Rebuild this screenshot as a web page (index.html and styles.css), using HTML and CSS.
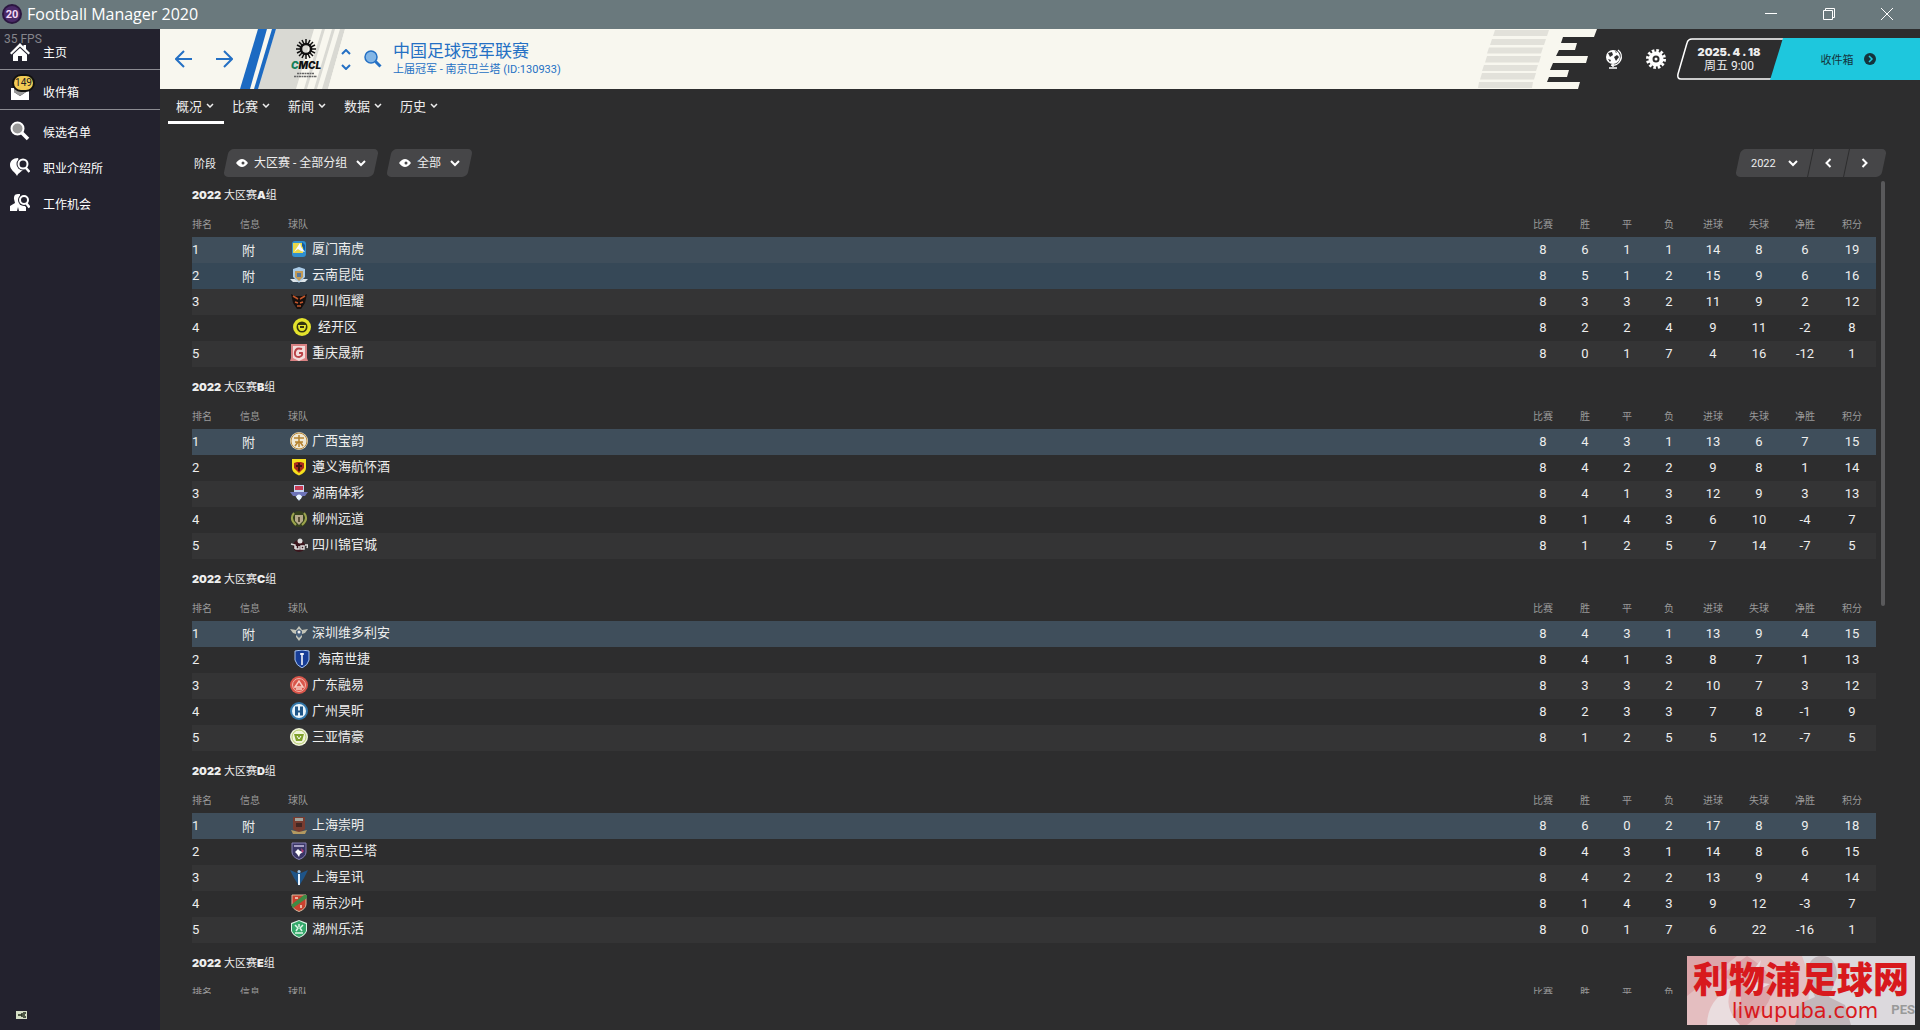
FILE: index.html
```html
<!DOCTYPE html>
<html lang="zh-CN">
<head>
    <meta charset="UTF-8">
    <meta name="viewport" content="width=device-width, initial-scale=1.0">
    <title>Football Manager 2020</title>
    <link rel="stylesheet" href="styles.css">
</head>
<body>

    <!-- Window title bar -->
    <div class="titlebar">
        <svg class="app-icon" viewBox="0 0 20 20"><circle cx="10" cy="10" r="10" fill="#2b1640"/><circle cx="10" cy="10" r="8" fill="#4a2a68"/><text x="10" y="14" text-anchor="middle" font-size="11" font-weight="bold" fill="#f3d9f5">20</text></svg>
        <span class="app-name">Football Manager 2020</span>
        <div class="window-buttons">
            <button aria-label="最小化"><svg viewBox="0 0 12 12"><path d="M0 5.500h12"/></svg></button>
            <button aria-label="还原"><svg viewBox="0 0 12 12"><path d="M.5 2.500h9v9h-9zM2.500 2.500V.5h9v9h-2"/></svg></button>
            <button aria-label="关闭"><svg viewBox="0 0 12 12"><path d="M0 0l12 12M12 0L0 12"/></svg></button>
        </div>
    </div>

    <div class="app">
        <!-- Sidebar -->
        <nav class="sidebar">
            <span class="fps">35 FPS</span>
            <a class="side-link lined" href="#">
                <svg viewBox="0 0 20 20"><path d="M10 1L0 11l1.500 1.500L10 4.500l8.500 8L20 11l-4-4V3h-2.500v1.500z"/><path d="M3 12.500l7-6.500 7 6.500V19h-5v-5H8v5H3z"/></svg>
                主页
            </a>
            <a class="side-link lined" href="#">
                <svg viewBox="0 0 20 20"><path d="M1 6h3v4l6 4 6-4V6h3v12H1z"/><path d="M4 4h12v6l-6 4-6-4z" fill="#999"/></svg>
                <span class="badge">149</span>
                收件箱
            </a>
            <a class="side-link" href="#">
                <svg viewBox="0 0 20 20"><circle cx="7.500" cy="7.500" r="6" fill="#999" stroke="#fff" stroke-width="2"/><path d="M12 12l6 6" stroke="#fff" stroke-width="3.500"/></svg>
                候选名单
            </a>
            <a class="side-link" href="#">
                <svg viewBox="0 0 20 20"><path d="M8 1C3 1 0 4 0 8c0 5 5 7 7 11 1-3 4-4 6-6z"/><circle cx="13" cy="7" r="6.500" fill="#23222e"/><circle cx="13" cy="7" r="4.500" fill="#23222e" stroke="#fff" stroke-width="2"/><path d="M16 11l3.500 4" stroke="#fff" stroke-width="2.500"/></svg>
                职业介绍所
            </a>
            <a class="side-link" href="#">
                <svg viewBox="0 0 20 20"><path d="M8 1C4 1 4 4 4 6l1 4-5 3v5h7l1-4 1 4h7v-4l-6-5V1z"/><circle cx="14" cy="7" r="6" fill="#23222e"/><circle cx="14" cy="7" r="4" fill="#23222e" stroke="#fff" stroke-width="2"/><path d="M16.500 10.500l3 4" stroke="#fff" stroke-width="2.500"/></svg>
                工作机会
            </a>
            <svg class="battery" viewBox="0 0 14 10"><path d="M1 1h11v8H1z" fill="#d5dfc6"/><path d="M3 5h4M7 3v4M8 3h3M8 7h3M8 5h2" stroke="#222d1c" stroke-width="1.500" fill="none"/></svg>
        </nav>

        <main class="main">
            <!-- Header -->
            <header class="header">
                <div class="banner">
                    <button class="nav-arrow" aria-label="后退"><svg viewBox="0 0 18 18"><path d="M9 1L1 9l8 8M1 9h16"/></svg></button>
                    <button class="nav-arrow" aria-label="前进"><svg viewBox="0 0 18 18"><path d="M9 1l8 8-8 8M17 9H1"/></svg></button>
                    <svg class="club-art" viewBox="0 0 108 60">
                        <path d="M36 0h69L88 60H17z" fill="#d9d9d3"/>
                        <path d="M18 0h9L10 60H0z" fill="#1c6ac2"/>
                        <path d="M32 0h4L18 60h-4z" fill="#1c6ac2"/>
                        <path d="M74 0h8L64 60h-8zM85 0h7L74 60h-7zM95 0h5L82 60h-5zM105 0h3L91 60h-3z" fill="#f8f7ef"/>
                        <g stroke="#111" stroke-width="2.500" fill="none">
                            <circle cx="66" cy="20" r="5"/>
                            <path d="M66 10v5M66 25v5M56 20h5M71 20h5M59 13l3.500 3.500M69.500 23.500L73 27M59 27l3.500-3.500M69.500 16.500L73 13M62 11l2 4M68 25l2 4M57 24l4-2M71 18l4-2M57 16l4 2M71 22l4 2M62 29l2-4M68 15l2-4" stroke-width="1.500"/>
                        </g>
                        <text x="66" y="40" text-anchor="middle" font-size="10" font-style="italic" font-weight="900" fill="#111"><tspan fill="#16805a">C</tspan>MCL</text>
                        <path d="M57 44.500h17M54 47.500h23" stroke="#666" stroke-width="1.500" stroke-dasharray="2 .5"/>
                    </svg>
                    <div class="stepper">
                        <button aria-label="上一个"><svg viewBox="0 0 10 6"><path d="M1 5l4-4 4 4"/></svg></button>
                        <button aria-label="下一个"><svg viewBox="0 0 10 6"><path d="M1 1l4 4 4-4"/></svg></button>
                    </div>
                    <button class="search" aria-label="搜索"><svg viewBox="0 0 18 18"><circle cx="7" cy="7" r="6" fill="#83b6e6" stroke="#2470c4" stroke-width="1.500"/><path d="M11.500 11.500l5 5" stroke="#2470c4" stroke-width="3"/></svg></button>
                    <div class="heading">
                        <h1>中国足球冠军联赛</h1>
                        <p>上届冠军 - 南京巴兰塔 (ID:130933)</p>
                    </div>
                </div>
                <svg class="banner-end" viewBox="0 0 130 60">
                    <path d="M0 0h127l-3 8H93l-2 6h16l-2 7H89l-3 6h32l-2 7H83l-3 7h19l-2 7H79l-2 5h33l-2 7H0z" fill="#f8f7ef"/>
                    <path d="M25 1h54l-2 6H23zM22 10h54l-2 6H20zM19 18.500h54l-2 6H17zM17 27h54l-2 6.500H15zM14 36h54l-2 6H12zM12 44h54l-2 6.500H10zM9 53h54l-1 6H8z" fill="#e2e1da"/>
                </svg>
                <div class="tools">
                    <button aria-label="世界"><svg viewBox="0 0 20 20"><circle cx="9" cy="8" r="7" fill="#fff"/><path d="M14 1a8.500 8.500 0 0 1-7 15M9 15v3M5 19h8" stroke="#fff" stroke-width="1.500" fill="none"/><path d="M4 4l4-1 1 3-3 2zM10 8l3-2 2 2-3 4zM4 10l3 1-1 2zM11 2l2 1-1 1z" fill="#2d2d2e"/></svg></button>
                    <button aria-label="设置"><svg viewBox="0 0 20 20"><circle cx="10" cy="10" r="8.500" fill="none" stroke="#fff" stroke-width="3" stroke-dasharray="2.600 1.850"/><circle cx="10" cy="10" r="5.500" fill="none" stroke="#fff" stroke-width="4"/><circle cx="10" cy="10" r="1.500" fill="#fff"/></svg></button>
                </div>
                <div class="clock">
                    <svg class="clock-frame" viewBox="0 0 108 42" preserveAspectRatio="none"><path d="M107 1H15q-4 0-5 4L1 36q-1 5 3 5h90" fill="none" stroke="#fff" stroke-width="1.500"/></svg>
                    <b>2025. 4 . 18</b>
                    <span>周五 9:00</span>
                </div>
                <button class="continue">收件箱
                    <svg viewBox="0 0 12 12"><circle cx="6" cy="6" r="6" fill="#14333c"/><path d="M5 3l3 3-3 3" fill="none" stroke="#1ec7dd" stroke-width="1.500"/></svg>
                </button>
            </header>

            <!-- Tabs -->
            <nav class="tabs">
                <button class="tab active">概况<svg viewBox="0 0 8 6"><path d="M1 2l3 3 3-3"/></svg></button>
                <button class="tab">比赛<svg viewBox="0 0 8 6"><path d="M1 2l3 3 3-3"/></svg></button>
                <button class="tab">新闻<svg viewBox="0 0 8 6"><path d="M1 2l3 3 3-3"/></svg></button>
                <button class="tab">数据<svg viewBox="0 0 8 6"><path d="M1 2l3 3 3-3"/></svg></button>
                <button class="tab">历史<svg viewBox="0 0 8 6"><path d="M1 2l3 3 3-3"/></svg></button>
            </nav>

            <!-- Filters -->
            <div class="filters">
                <label for="stage">阶段</label>
                <div class="pill stage-pill">
                    <svg class="eye" viewBox="0 0 12 8"><path d="M0 4q6-8 12 0q-6 8-12 0z" fill="#fff"/><circle cx="7" cy="4" r="1.500" fill="#48484a"/></svg>
                    <select id="stage"><option>大区赛 - 全部分组</option></select>
                    <svg class="chevron" viewBox="0 0 10 7"><path d="M1 1l4 4 4-4"/></svg>
                </div>
                <div class="pill group-pill">
                    <svg class="eye" viewBox="0 0 12 8"><path d="M0 4q6-8 12 0q-6 8-12 0z" fill="#fff"/><circle cx="7" cy="4" r="1.500" fill="#48484a"/></svg>
                    <select aria-label="分组"><option>全部</option></select>
                    <svg class="chevron" viewBox="0 0 10 7"><path d="M1 1l4 4 4-4"/></svg>
                </div>
                <div class="pill season">
                    <select aria-label="赛季"><option>2022</option></select>
                    <svg class="chevron" viewBox="0 0 10 7"><path d="M1 1l4 4 4-4"/></svg>
                    <button aria-label="上一赛季"><svg viewBox="0 0 7 10"><path d="M5.500 1l-4 4 4 4"/></svg></button>
                    <button aria-label="下一赛季"><svg viewBox="0 0 7 10"><path d="M1.500 1l4 4-4 4"/></svg></button>
                </div>
            </div>

            <!-- Group tables, filled in by script.js -->
            <div class="scroll-area">
                <div class="groups" id="groups"></div>
                <div class="scrollbar"></div>
            </div>
        </main>
    </div>

    <div class="watermark">
        <svg viewBox="0 0 228 69" preserveAspectRatio="none">
            <path d="M0 0h115q14 34 0 69H0z" fill="#e8b3b5"/>
            <path d="M0 0h50L0 40zM60 0q50 30 0 69H34q40-30 0-50z" fill="#dc9094"/>
            <path d="M20 69q0-25 25-38-10 20 8 38zM60 22l14-18-5 22 14 2-20 10z" fill="#f1dfe0"/>
            <path d="M108 69l6-22 14-6-8-20q0-21 15-21t15 21l-8 20 16 8 6 20z" fill="#b9a9ad"/>
        </svg>
        <strong>利物浦足球网</strong>
        <span>liwupuba.com</span>
        <em>PES</em>
    </div>

    <script src="script.js"></script>

</body>
</html>
```
FILE: styles.css
```css
* {
    box-sizing: border-box;
}
body {
    margin: 0;
    height: 100vh;
    display: flex;
    flex-direction: column;
    overflow: hidden;
    background-color: #2d2d2e;
    color: #eee;
    font-family: Roboto, "Noto Sans CJK SC", sans-serif;
    font-size: 13px;
}
button, select {
    font: inherit;
    color: inherit;
    background: none;
    border: none;
    padding: 0;
    margin: 0;
    cursor: pointer;
}
select {
    appearance: none;
    outline: none;
}
svg {
    display: block;
    flex: none;
}

/* Title bar */
.titlebar {
    flex: none;
    display: flex;
    align-items: center;
    height: 29px;
    padding: 0 4px 1px 2px;
    background-color: #6a797d;
    color: #fff;
}
.app-icon {
    width: 20px;
    height: 20px;
}
.app-name {
    margin-left: 5px;
    font-family: "Open Sans", sans-serif;
    font-size: 16px;
}
.window-buttons {
    display: flex;
    margin-left: auto;
}
.window-buttons button {
    display: flex;
    justify-content: center;
    align-items: center;
    width: 58px;
    height: 28px;
}
.window-buttons svg {
    width: 12px;
    height: 12px;
    fill: none;
    stroke: #fff;
}

.app {
    flex: 1;
    min-height: 0;
    display: flex;
}

/* Sidebar */
.sidebar {
    position: relative;
    flex: none;
    display: flex;
    flex-direction: column;
    width: 160px;
    padding-top: 1px;
    background-color: #23222e;
}
.fps {
    position: absolute;
    top: 3px;
    left: 4px;
    font-size: 12px;
    line-height: 14px;
    color: #85858c;
}
.side-link {
    position: relative;
    display: flex;
    align-items: center;
    height: 36px;
    padding-left: 10px;
    gap: 13px;
    color: #fff;
    font-size: 12px;
    text-decoration: none;
}
.side-link svg {
    width: 20px;
    height: 20px;
    fill: #fff;
}
.side-link.lined {
    height: 40px;
    padding-top: 4px;
    border-bottom: 1px solid #8b8b92;
}
.side-link.lined + .side-link:not(.lined) {
    margin-top: 3px;
}
.badge {
    position: absolute;
    top: 4px;
    left: 12px;
    width: 23px;
    height: 18px;
    border: 2px solid #111;
    border-radius: 9px;
    background-color: #f3cc55;
    color: #222;
    font-size: 10px;
    line-height: 14px;
    text-align: center;
}
.battery {
    width: 14px;
    height: 10px;
    margin: auto 0 10px 15px;
}

.main {
    flex: 1;
    min-width: 0;
    display: flex;
    flex-direction: column;
}

/* Header */
.header {
    flex: none;
    display: flex;
    align-items: center;
    height: 60px;
}
.banner {
    flex: 1;
    display: flex;
    align-items: center;
    height: 60px;
    padding-left: 4px;
    background-color: #f8f7ef;
    color: #2470c4;
}
.nav-arrow {
    display: flex;
    justify-content: center;
    width: 40px;
}
.nav-arrow svg {
    width: 18px;
    height: 18px;
    fill: none;
    stroke: #2470c4;
    stroke-width: 2;
}
.club-art {
    width: 108px;
    height: 60px;
    margin-left: -4px;
    font-family: Inter, sans-serif;
}
.stepper {
    display: flex;
    flex-direction: column;
    gap: 9px;
    margin-left: -7px;
    padding-top: 1px;
}
.stepper svg {
    width: 10px;
    height: 6px;
    fill: none;
    stroke: #2470c4;
    stroke-width: 2;
}
.search {
    margin-left: 13px;
}
.search svg {
    width: 18px;
    height: 18px;
}
.heading {
    margin-left: 11px;
}
.heading h1 {
    margin: 0;
    font-size: 17px;
    font-weight: normal;
    line-height: 21px;
}
.heading p {
    margin: 0;
    font-size: 11px;
    line-height: 16px;
}
.banner-end {
    width: 130px;
    height: 60px;
}
.tools {
    display: flex;
    gap: 22px;
    padding: 0 11px 0 4px;
}
.tools svg {
    width: 20px;
    height: 20px;
}
.clock {
    position: relative;
    display: flex;
    flex-direction: column;
    align-items: center;
    justify-content: center;
    width: 108px;
    height: 42px;
    padding-right: 4px;
    font-size: 12px;
    line-height: 14px;
}
.clock-frame {
    position: absolute;
    inset: 0;
    width: 100%;
    height: 100%;
}
.clock b {
    font-family: Inter, sans-serif;
    font-size: 11px;
    font-weight: 900;
}
.continue {
    display: flex;
    align-items: center;
    justify-content: center;
    gap: 10px;
    width: 150px;
    height: 42px;
    margin-left: -15px;
    padding-left: 26px;
    padding-right: 20px;
    background-color: #1ec7dd;
    clip-path: polygon(13px 0, 100% 0, 100% 100%, 0 100%);
    color: #14333c;
    font-size: 11px;
}
.continue svg {
    width: 12px;
    height: 12px;
}

/* Tabs */
.tabs {
    flex: none;
    display: flex;
    padding-left: 8px;
}
.tab {
    display: flex;
    align-items: center;
    gap: 4px;
    width: 56px;
    height: 35px;
    padding-left: 8px;
    border-bottom: 3px solid transparent;
}
.tab.active {
    border-color: #fff;
}
.tab svg {
    width: 8px;
    height: 6px;
    fill: none;
    stroke: #eee;
    stroke-width: 1.5;
}

/* Filters */
.filters {
    flex: none;
    display: flex;
    align-items: center;
    height: 28px;
    margin-top: 25px;
    padding: 0 36px 0 34px;
    font-size: 12px;
}
.filters label {
    margin-right: 10px;
    font-size: 11px;
}
.pill {
    position: relative;
    display: flex;
    align-items: center;
    height: 28px;
}
.pill::before {
    content: "";
    position: absolute;
    inset: 0;
    z-index: -1;
    border-radius: 5px;
    background-color: #464648;
    transform: skewX(-12deg);
}
.stage-pill, .group-pill {
    gap: 6px;
    padding: 0 10px;
    margin-right: 13px;
}
.stage-pill select, .group-pill select {
    margin-right: 2px;
}
.pill .eye {
    width: 12px;
    height: 8px;
}
.pill .chevron {
    width: 10px;
    height: 7px;
}
.chevron, .season button svg {
    fill: none;
    stroke: #fff;
    stroke-width: 2;
}
.season {
    margin-left: auto;
    padding-left: 13px;
    padding-right: 2px;
    font-size: 11px;
}
.season .chevron {
    margin: 0 12px;
}
.season button {
    position: relative;
    display: flex;
    align-items: center;
    justify-content: center;
    width: 36px;
    height: 28px;
}
.season button::before {
    content: "";
    position: absolute;
    inset: 0;
    border-left: 1px solid #2d2d2e;
    transform: skewX(-12deg);
}
.season button svg {
    width: 7px;
    height: 10px;
}

/* Group tables */
.scroll-area {
    flex: 1;
    min-height: 0;
    display: flex;
    gap: 5px;
    margin-bottom: 36px;
    padding: 0 35px 0 32px;
}
.groups {
    flex: 1;
    overflow: hidden;
}
.groups section {
    margin-bottom: 2px;
}
.scrollbar {
    width: 4px;
    height: 52%;
    margin-top: 4px;
    border-radius: 2px;
    background-color: #59595b;
}
.group-title {
    height: 36px;
    margin: 0;
    font-size: 11px;
    font-weight: normal;
    line-height: 36px;
}
.group-title b {
    font-family: Inter, sans-serif;
    font-weight: 900;
}
.standings {
    width: 100%;
    table-layout: fixed;
    border-collapse: collapse;
}
.standings th {
    height: 24px;
    padding: 0 0 3px;
    color: #9a9a9a;
    font-size: 10px;
    font-weight: normal;
    text-align: left;
}
.standings td {
    height: 26px;
    padding: 0 0 2px;
}
.standings tbody tr:nth-child(odd) {
    background-color: #343435;
}
.standings tbody tr.playoff {
    background-color: #364857;
}
.standings tbody tr.playoff:nth-child(odd) {
    background-color: #3f4e5b;
}
.standings .num {
    text-align: center;
}
.standings .info {
    padding-left: 2px;
}
.col-rank, .col-info {
    width: 48px;
}
.col-stat {
    width: 42px;
}
.col-goals {
    width: 46px;
}
.col-points {
    width: 48px;
}
.club {
    display: flex;
    align-items: center;
    gap: 4px;
    padding-left: 2px;
    line-height: 18px;
}
.club svg {
    width: 18px;
    height: 18px;
}
.club.wide {
    gap: 7px;
    padding-left: 5px;
}

/* Watermark */
.watermark {
    position: fixed;
    right: 5px;
    bottom: 5px;
    width: 228px;
    height: 69px;
    overflow: hidden;
    background-color: #dcd9dd;
    color: #d8191d;
    text-align: center;
}
.watermark svg {
    position: absolute;
    inset: 0;
    width: 100%;
    height: 100%;
    opacity: 0.7;
}
.watermark strong, .watermark span {
    position: relative;
    display: block;
}
.watermark strong {
    padding-top: 7px;
    font-size: 36px;
    font-weight: 900;
    line-height: 36px;
    white-space: nowrap;
}
.watermark span {
    padding-left: 8px;
    font-family: "DejaVu Sans", sans-serif;
    font-size: 21px;
    line-height: 24px;
}
.watermark em {
    position: absolute;
    right: 0;
    bottom: 8px;
    color: #999;
    font-size: 13px;
    font-style: normal;
    font-weight: bold;
}
```
FILE: script.js
```js
// Crest shapes, drawn on an 18x18 grid
const shield = 'M2 1h14v9q0 5-7 7.500Q2 15 2 10z';
const crests = {
    xiamen: '<rect x="2" y="1" width="14" height="16" rx="3" fill="#2f8fd0"/><path d="M3 3h10v10H3z" fill="#e9d84a"/><path d="M4 12l6-9 1 4 4 5-4-1-3-2z" fill="#f5f9ff"/><path d="M12 2l3 3v6l-3-5z" fill="#175a9c"/>',
    yunnan: '<path d="M3 3l6-2 6 2v8l-6 6-6-6z" fill="#a9cbe8"/><path d="M5 5h8v6l-4 4-4-4z" fill="#c49b55"/><path d="M7 7h4v4H7z" fill="#58779a"/><path d="M0 13h5l4 3 4-3h5l-3 3H3z" fill="#dde5ea"/>',
    hengyao: '<path d="M1 2l4 2h8l4-2-2 9-4 6H7l-4-6z" fill="#17100e"/><path d="M3 4l5 3M15 4l-5 3M5 10l3 1M13 10l-3 1M7 14h4" stroke="#c4572c" stroke-width="1.500"/>',
    jingkai: '<circle cx="9" cy="9" r="9" fill="#e4e32c"/><circle cx="9" cy="9" r="5.500" fill="#34350f"/><path d="M5 7h8q0 6-4 6T5 7z" fill="#e4e32c"/><path d="M7 8h4v2H7z" fill="#34350f"/>',
    chongqing: '<path d="M1 0h16v14l1 3H0l1-3z" fill="#d98283"/><path d="M3 2h12v12l-6 3-6-3z" fill="#f3dcdb"/><path d="M12 5q-6-2-7 3t4 5q4-1 3-4H9" fill="none" stroke="#b94247" stroke-width="2"/>',
    guangxi: '<circle cx="9" cy="9" r="9" fill="#f0e8d4"/><circle cx="9" cy="9" r="8" fill="none" stroke="#ba8a3c"/><path d="M4 6h10M5 10h8M9 3v12M5 14l3-4M13 14l-3-4" stroke="#b5822f" stroke-width="1.500"/>',
    zunyi: '<path d="' + shield + '" fill="#f6df1d"/><path d="M4 5l3-1h4l3 1v5l-5 5-5-5z" fill="#a92a1c"/><path d="M9 5v8M6 8h6" stroke="#40130d" stroke-width="2"/>',
    hunan: '<path d="M4 1h10v9l-5 7-5-7z" fill="#c7d7f1"/><path d="M5 2h8v4H5z" fill="#c83d55"/><path d="M0 8h18l-3 4H3z" fill="#6d73b8"/><circle cx="9" cy="13" r="2.500" fill="#eaf5ff"/>',
    liuzhou: '<circle cx="9" cy="9" r="8" fill="#35401e"/><path d="M4 3q-5 6 2 12M14 3q5 6-2 12" fill="none" stroke="#9ba34c" stroke-width="2"/><path d="M5 5h8v6l-4 4-4-4z" fill="#b6a98b"/><path d="M8 7h2v5H8z" fill="#594e38"/>',
    jinguan: '<circle cx="9" cy="10" r="6" fill="#3b151c"/><circle cx="10" cy="5" r="2.500" fill="#ddd"/><path d="M1 8l4 1v4M6 10v3h3v-3M11 10h3v3h-3zM15 9h3l-1 3" fill="none" stroke="#ddd" stroke-width="1.500"/>',
    shenzhen: '<path d="M0 5l6 1 3-4 3 4 6-1-3 4-3 1v3l-3 4-3-4v-3L3 9z" fill="#c3c4b8"/><path d="M6 7l3-2 3 2v4l-3 3-3-3z" fill="#49607a"/><circle cx="9" cy="8" r="1.500" fill="#eee"/>',
    hainan: '<path d="M2 1q7-2 14 0v9q-1 5-7 8-6-3-7-8z" fill="#173d96" stroke="#a9c4ee"/><path d="M9 3v12M7 4h4" stroke="#fff" stroke-width="1.500"/>',
    guangdong: '<circle cx="9" cy="9" r="9" fill="#d9564b"/><circle cx="9" cy="9" r="6.500" fill="none" stroke="#f0b3a8"/><path d="M5 11l4-6 4 6zM6 13h6" fill="none" stroke="#f6cfc6" stroke-width="1.500"/>',
    guangzhou: '<circle cx="9" cy="9" r="9" fill="#3278ac"/><circle cx="9" cy="9" r="7" fill="#e8f4fb"/><path d="M5 4.500h3v4h2v-4h3v9h-3v-3H8v3H5z" fill="#1f5688"/>',
    sanya: '<circle cx="9" cy="9" r="9" fill="#f1f4dc"/><circle cx="9" cy="9" r="7" fill="none" stroke="#b5cb6b"/><path d="M4 6h10l-2 7H6z" fill="#7fa02c"/><path d="M7 8l2 3 2-3" fill="none" stroke="#fff"/>',
    chongming: '<path d="M3 1h12v12l-6 4-6-4z" fill="#783c30"/><path d="M5 2h8v3H5z" fill="#a2a39c"/><path d="M6 7h6v4H6z" fill="#422622"/><path d="M1 14l8 2 8-2-2 4H3z" fill="#b39961"/>',
    balanta: '<path d="' + shield + '" fill="#3b3767" stroke="#8983b8"/><path d="M4 4h10" stroke="#cbc5e2" stroke-width="1.500"/><path d="M8 7l2 2 3 1-3 2-1 3-2-3-2-2z" fill="#fff"/><path d="M11 6l3 3-2 2z" fill="#bb3e73"/>',
    chengxun: '<path d="M0 2l7 3 2-2 2 2 7-3-4 8-5 8-5-8z" fill="#1e5488"/><path d="M9 6v11" stroke="#e5f2ff" stroke-width="2"/><circle cx="9" cy="3.500" r="1.500" fill="#9fcaf0"/>',
    shaye: '<path d="' + shield + '" fill="#c9412f" stroke="#d9b99d"/><path d="M1 11L14 1h3v3L3 14z" fill="#3f8b45"/><path d="M5 4h3M11 11v3" stroke="#f1ddcc" stroke-width="1.500"/>',
    huzhou: '<path d="M9 0l8 3v8q-2 5-8 7-6-2-8-7V3z" fill="#dff5e8"/><path d="M9 1l7 3v7q-2 4-7 6-5-2-7-6V4z" fill="#35a86b"/><path d="M5 5l3 3-2 3M13 5l-3 3 2 3M9 4v3M5 13h8" fill="none" stroke="#dff5e8" stroke-width="1.500"/>'
};

// crest, name, then the eight stat columns
const groups = [
    { name: 'A', playoff: 2, teams: [
        ['xiamen', '厦门南虎', 8, 6, 1, 1, 14, 8, 6, 19],
        ['yunnan', '云南昆陆', 8, 5, 1, 2, 15, 9, 6, 16],
        ['hengyao', '四川恒耀', 8, 3, 3, 2, 11, 9, 2, 12],
        ['jingkai', '经开区', 8, 2, 2, 4, 9, 11, -2, 8],
        ['chongqing', '重庆晟新', 8, 0, 1, 7, 4, 16, -12, 1]
    ] },
    { name: 'B', playoff: 1, teams: [
        ['guangxi', '广西宝韵', 8, 4, 3, 1, 13, 6, 7, 15],
        ['zunyi', '遵义海航怀酒', 8, 4, 2, 2, 9, 8, 1, 14],
        ['hunan', '湖南体彩', 8, 4, 1, 3, 12, 9, 3, 13],
        ['liuzhou', '柳州远道', 8, 1, 4, 3, 6, 10, -4, 7],
        ['jinguan', '四川锦官城', 8, 1, 2, 5, 7, 14, -7, 5]
    ] },
    { name: 'C', playoff: 1, teams: [
        ['shenzhen', '深圳维多利安', 8, 4, 3, 1, 13, 9, 4, 15],
        ['hainan', '海南世捷', 8, 4, 1, 3, 8, 7, 1, 13],
        ['guangdong', '广东融易', 8, 3, 3, 2, 10, 7, 3, 12],
        ['guangzhou', '广州昊昕', 8, 2, 3, 3, 7, 8, -1, 9],
        ['sanya', '三亚情豪', 8, 1, 2, 5, 5, 12, -7, 5]
    ] },
    { name: 'D', playoff: 1, teams: [
        ['chongming', '上海崇明', 8, 6, 0, 2, 17, 8, 9, 18],
        ['balanta', '南京巴兰塔', 8, 4, 3, 1, 14, 8, 6, 15],
        ['chengxun', '上海呈讯', 8, 4, 2, 2, 13, 9, 4, 14],
        ['shaye', '南京沙叶', 8, 1, 4, 3, 9, 12, -3, 7],
        ['huzhou', '湖州乐活', 8, 0, 1, 7, 6, 22, -16, 1]
    ] },
    { name: 'E', playoff: 0, teams: [] }
];

const statNames = ['比赛', '胜', '平', '负', '进球', '失球', '净胜', '积分'];
const statCols = ['stat', 'stat', 'stat', 'stat', 'goals', 'goals', 'goals', 'points'];
const wideCrests = ['jingkai', 'hainan'];

function teamRow(team, index, playoff) {
    const [crest, name, ...stats] = team;
    const through = index < playoff;
    return `<tr class="${through ? 'playoff' : ''}">
        <td>${index + 1}</td>
        <td class="info">${through ? '附' : ''}</td>
        <td><div class="club ${wideCrests.includes(crest) ? 'wide' : ''}"><svg viewBox="0 0 18 18">${crests[crest]}</svg>${name}</div></td>
        ${stats.map(s => `<td class="num">${s}</td>`).join('')}
    </tr>`;
}

document.getElementById('groups').innerHTML = groups.map(group => `
    <section>
        <h2 class="group-title"><b>2022</b> 大区赛<b>${group.name}</b>组</h2>
        <table class="standings">
            <colgroup>
                <col class="col-rank"><col class="col-info"><col>
                ${statCols.map(c => `<col class="col-${c}">`).join('')}
            </colgroup>
            <thead>
                <tr><th>排名</th><th>信息</th><th>球队</th>${statNames.map(n => `<th class="num">${n}</th>`).join('')}</tr>
            </thead>
            <tbody>${group.teams.map((team, i) => teamRow(team, i, group.playoff)).join('')}</tbody>
        </table>
    </section>`).join('');
```
